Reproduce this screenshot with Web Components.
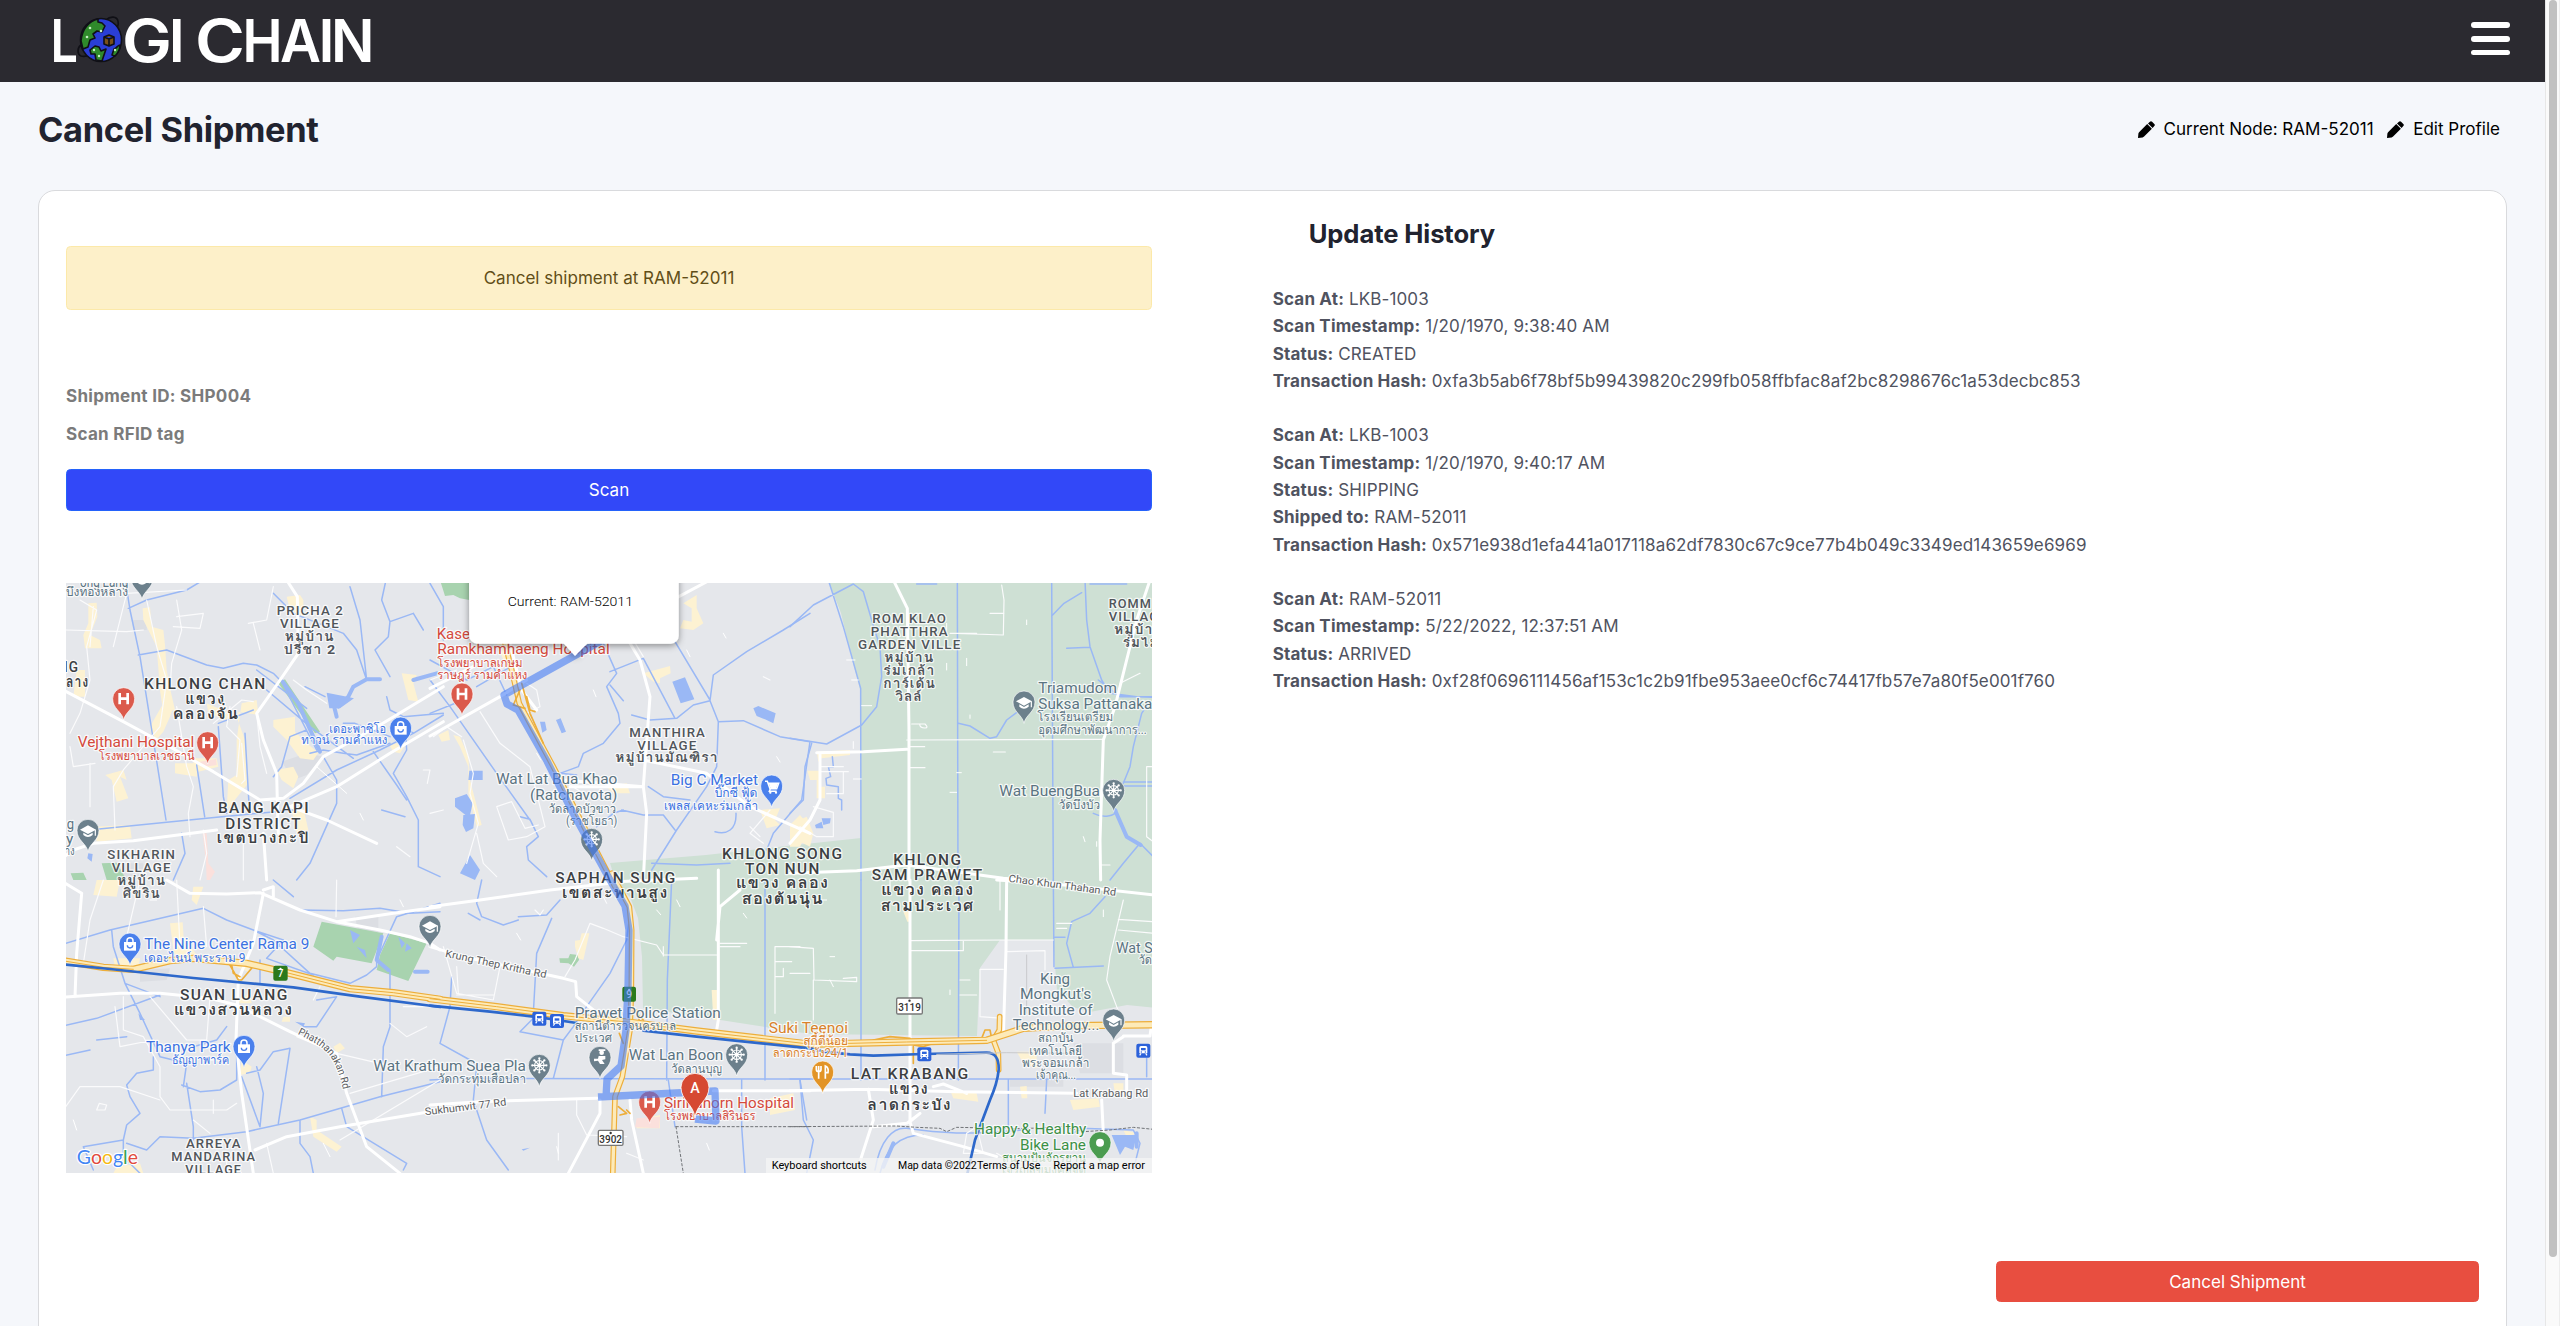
<!DOCTYPE html>
<html lang="en">
<head>
<meta charset="utf-8">
<title>Cancel Shipment</title>
<style>
html,body{margin:0;height:100%;overflow:hidden}
body{font-family:Inter,"Liberation Sans",sans-serif;font-size:17.05px;line-height:27.28px;background:#f5f7fb;color:#50535f}
</style>
</head>
<body>
<logi-app></logi-app>
<script>
const define = (name, html, setup) => {
  const tpl = document.createElement('template');
  tpl.innerHTML = html;
  customElements.define(name, class extends HTMLElement {
    constructor() {
      super();
      this.attachShadow({mode: 'open'}).append(tpl.content.cloneNode(true));
    }
    connectedCallback() { if (setup) setup(this, this.shadowRoot); }
  });
};

/* ---------- brand ---------- */
const letters = list => list.map(([c, x, w]) => `<tspan x="${x}" textLength="${w}" lengthAdjust="spacingAndGlyphs">${c}</tspan>`).join('');
define('logi-logo', `
<style>:host{display:block;width:340px;height:82px}svg{display:block}text{font-family:Inter,sans-serif;font-weight:600;font-size:58.5px;fill:#fff}</style>
<svg width="340" height="82" viewBox="46 0 340 82">
  <text y="61.5">${letters([['L', 50.5, 27.5]])}</text>
  <text y="61.5">${letters([['G', 122, 50], ['I', 168.8, 16], ['C', 195, 50], ['H', 242.5, 40], ['A', 280, 41], ['I', 318.6, 16], ['N', 331, 43.5]])}</text>
  <g stroke="#101016" stroke-width="1.6" stroke-linejoin="round">
    <path fill="none" d="M106 20c4-4 11-4 12 1 1 4-1 8-4 12M81 45c-4 3-4 9 0 11 3 1 7 0 10-1"/>
    <ellipse cx="101" cy="40" rx="20.500" ry="21.500" fill="#2a3ed6"/>
    <path fill="#2f8a2b" d="M98 19c-9 2-16 10-17 22l2 8 5-2 2-7 5-2-2-4 4-3 5 1 3-6-3-3-4-1zM90 50l5-4 4 1 2 4 5-2-2 6-2 6-6-1-1-6-4 0zM120 45c-2 0-3 3-6 4l-2 6 3 1c3-3 5-7 5-11z"/>
    <path fill="#7a5018" d="M104 37l5-2 5 2v7l-5 2-5-2zM104 37l5 2 5-2M109 39v7"/>
  </g>
  <g fill="#c8efc4"><circle cx="90" cy="28" r="1.300"/><circle cx="101" cy="31" r="1.300"/><circle cx="87" cy="37" r="1.300"/><circle cx="94" cy="50" r="1.200"/><circle cx="99" cy="56" r="1.200"/><circle cx="115" cy="50" r="1.200"/></g>
</svg>`);

define('logi-header', `
<style>
:host{display:flex;justify-content:space-between;align-items:flex-start;height:82px;background:#2b2a30;padding:0 35px 0 46px;box-sizing:border-box}
button{all:unset;display:flex;flex-direction:column;gap:8px;margin-top:22px}
i{display:block;width:39px;height:5.8px;border-radius:3px;background:#fff}
</style>
<logi-logo></logi-logo><button aria-label="Menu"><i></i><i></i><i></i></button>`);

define('edit-link', `
<style>:host{display:flex;align-items:center;color:#000;gap:9px}svg{display:block}</style>
<svg width="17" height="17" viewBox="0 0 17 17"><path d="M0 17 .4 12.400Q.6 11.600 1.300 10.900L9.200 3.100 13.900 7.800 6.100 15.600Q5.400 16.300 4.600 16.500zM10 2.400 11.900.7Q13-.4 14.100.7L16.300 2.900Q17.400 4 16.300 5.100L14.600 7z"/></svg>
<slot></slot>`);

define('page-title', `
<style>
:host{display:flex;justify-content:space-between;align-items:center;height:42px;margin:26px 7px 40px 0}
h1{margin:0;font-size:34.400px;line-height:43px;font-weight:700;letter-spacing:-.35px;color:#21232f;white-space:nowrap}
div{display:flex;gap:13.500px;white-space:nowrap}
</style>
<h1><slot></slot></h1><div><slot name="links"></slot></div>`);

define('alert-banner', `
<style>:host{display:flex;align-items:center;justify-content:center;height:64px;box-sizing:border-box;background:#fdf0c9;border:1px solid #fce9a9;border-radius:4.5px;color:#614e17}</style><slot></slot>`);

define('action-button', `
<style>
:host{display:flex;height:42px;box-sizing:border-box;align-items:center;justify-content:center;border-radius:4.5px;background:#3248f8;border:1px solid #2462fb;color:#fff}
:host([danger]){background:#e84e40;border-color:#e84e40;width:483px;height:41px}
</style><slot></slot>`);

define('field-label', `
<style>:host{display:block;height:27.300px;color:#7b7b7b;font-weight:700;letter-spacing:.28px}</style><slot></slot>`);

/* ---------- history ---------- */
define('history-entry', `
<style>:host{display:block;margin-bottom:27.280px;letter-spacing:.115px}p{margin:0;white-space:nowrap}b{font-weight:700;letter-spacing:.16px;color:#50535f}</style><div></div>`,
(el, root) => {
  const box = root.querySelector('div');
  for (const key of ['Scan At', 'Scan Timestamp', 'Status', 'Shipped to', 'Transaction Hash']) {
    const v = el.getAttribute(key.toLowerCase().replace(' ', '-'));
    if (!v) continue;
    const p = document.createElement('p'), b = document.createElement('b');
    b.textContent = key + ':';
    p.append(b, ' ' + v);
    box.append(p);
  }
});

define('update-history', `
<style>:host{display:block}h2{margin:0 0 36px;padding-left:36px;font-size:25.600px;line-height:30px;font-weight:700;letter-spacing:-.1px;color:#21232f}</style>
<h2>Update History</h2><slot></slot>`);

/* ---------- map ---------- */
/* Each tile keeps its own coordinates, three units to a pixel. */
const TILES = {A: [-6, -3], B: [364, -3], C: [724, -3], D: [-6, 297], E: [364, 297], F: [724, 297]};
const place = (t, s) => `<g transform="translate(${TILES[t]}) scale(.33333)">${s}</g>`;
const layers = [];
const lines = (color, width, tiles, extra = '') => {
  for (const t in tiles) layers.push(place(t, `<path d="${tiles[t]}" fill="none" stroke="${color}" stroke-width="${width}" stroke-linejoin="round" stroke-linecap="round" ${extra}/>`));
};
const areas = (color, tiles) => {
  for (const t in tiles) layers.push(place(t, `<path d="${tiles[t]}" fill="${color}"/>`));
};

layers.push('<rect width="1086" height="590" fill="#e5e7eb"/>');
layers.push('<path fill="#cee0d4" d="M762-3 775 30 787 80 795 110V255L730 262 640 272 544 280 550 300 564 314 572 335 576 374 577 425 744 451 911 453 914 385 934 357H987L991 407 1007 424 1024 429 1061 422 1091 425V-3z"/>');
areas('#dcdee3', {
  A: 'M215 120h45v30h-40zM665 545 740 520 790 530 740 585 700 600zM190 850h60v50h-60z',
  D: 'M240 270 330 265 320 300 240 305zM885 110h70v45h-60z', F: 'M850 490h150v90h-130zM660 600h160v20h-160z'});
areas('#a8d3af', {
  A: 'M655 310 675 298 780 455 765 460zM125 850 170 848 200 900H140zM32 880 70 878 80 900H40z',
  B: 'M30 0H118V60L90 55 70 45 45 48z',
  D: 'M785 125 970 160 935 250 830 230 820 242 760 200zM990 160 1100 190 1045 303 950 270 960 225z',
  E: 'M388 235 415 235 420 222 445 225 447 240 432 260 415 250 390 248z'});
areas('#fdf2d2', {
  A: 'M85 70 110 68 112 110 90 165 120 180 125 205 75 205 70 165 85 130zM248 85 270 82 275 140 310 150 315 195 320 270 330 325 345 390 310 400 300 330 290 200 250 120zM310 370 340 380 330 410 310 455 280 490 270 440zM50 270h25v80H40zM545 370 590 360 595 405 535 395 530 410 555 480 565 610 500 690 505 600 530 585 530 480zM440 370 510 400 500 420 445 400zM680 50 720 45 730 60 730 110 690 90zM640 420 705 410 705 455 740 490 775 518 760 540 720 535 680 480 640 440zM345 550 400 550 400 535 470 535 475 560 415 575 410 590 345 580zM650 570 700 560 715 590 700 625 665 600zM136 585 190 570 200 600 180 590 205 655 170 665 155 600zM1025 280 1070 285 1060 310 1075 365 1045 360zM985 490 1040 490 1020 520 1000 515zM100 740 210 735 215 775 110 785zM695 690 730 685 745 750 710 760z',
  B: 'M200 190 225 190 240 245 220 240zM640 280 720 258 722 280 690 295 690 310 670 305zM760 70 800 45 800 85 820 130 790 150 750 145 760 120 785 125 785 85zM25 465 55 450 60 480 35 485zM70 465 90 470 115 530 120 600 155 735 140 740 115 640 115 560 90 500zM530 620 590 610 600 640 550 640zM990 690 1050 685 1035 720 1050 735 1010 745zM1085 730 1130 710 1150 760 1140 800 1080 770z',
  C: 'M80 515 180 510 180 525 95 535 85 545zM52 572H90V620H105V655H80V600H60zM0 735 30 705 60 740 30 800 0 800z',
  D: 'M110 0 180 0 170 50 100 45zM400 20 430 20 410 75 395 60zM330 130 368 127 372 190 400 210 420 240 360 250 340 210zM160 235 240 235 235 262 165 262zM500 250 570 250 565 275zM530 360 570 340 575 370 540 370zM545 540 575 560 570 580 540 585zM820 500 840 488 855 505 830 520zM670 410 690 410 690 425 665 425zM750 710 770 720 770 750 845 800 830 815 760 770zM170 860 240 850 250 880H160z',
  E: 'M455 160 478 160 460 240 445 235 435 200 435 182 450 180zM845 330 862 330 862 420 850 420zM1020 655 1090 640 1095 690 1020 705zM620 720 690 705 690 745 620 745z',
  F: 'M340 95h22v30h-10zM480 630 560 640 565 665 490 655zM690 620 710 618 712 655 695 655zM840 660 925 655 930 680 850 690zM970 610 1000 610 1000 640 975 640zM680 515 740 515 740 565 700 550zM1000 750 1040 760 1010 770z'});
areas('#fbe0dc', {E: 'M620 715 690 710 688 745 615 742z', A: 'M420 545 468 537 470 555 425 562zM428 760 440 760 445 850 465 875 450 900H440L438 850z'});

/* canals and ponds */
lines('#9ab8f5', 4.500, {
  A: 'M196 0 210 90 240 230 280 480 318 720M235 225 320 210 440 255 490 265 550 250 590 255 640 280 665 305 770 510M205 85 260 60 380 30 430 0M590 270 740 385M620 330 750 440 880 535M475 440 490 650 500 700M555 460 568 690M475 430 580 390M410 555 434 710M110 748 470 712 700 690M690 655 830 570 960 510 1060 460 1150 405M740 450 690 470 665 560 640 590M750 520 790 510 850 520 890 525 990 490M790 530 830 600 830 670 790 760 750 850 710 900M870 20 900 120 920 300M640 40 700 100 800 140 850 160 890 210 920 300M978 0 965 60 990 125 1060 100M990 125 985 170 945 210 990 290M1060 100 1090 150M735 320 795 350M980 350 990 390 1030 410 1150 400M1035 420 1040 510 1000 580 1040 650 1075 720 1075 860 1140 890M940 515 1010 615 1040 660M965 690 1035 710M850 430 885 430 990 470M1010 420 1060 460M365 760 375 820 340 900',
  B: 'M0 240 110 300 190 260 230 345M0 300 60 380 200 580 300 720M140 320 260 250M0 400 100 360M0 10 40 80 40 180M520 190 560 280 530 320 565 400 570 430 520 490 460 520 445 560 390 580 440 585M540 275 640 235 735 415M620 0 690 110 840 360M540 315 580 362M605 405 660 420 740 415 790 375 840 362 850 285 950 215 1060 150 1140 100M840 362 865 425 860 560 830 620 740 750 665 870M865 425 940 422 1050 470 1140 485M1140 485 1115 660 1030 760 1010 810M575 690 640 705 700 705 735 750M655 620 700 650 780 660M500 740 550 700 580 690M855 755C890 765 920 750 918 700M270 710 300 718 325 770 290 800 295 840 350 890M665 850 800 855 900 850',
  C: 'M0 140 70 75 190 12 220 35 245 120 270 200 275 290 260 380 215 435 110 492 0 475M115 0 160 140 212 325 213 900M502 0 504 900M785 0 790 900M785 108 822 70 875 38M380 12H440M900 12H1010M885 0 890 120 900 200 935 300M505 430 540 438 600 475 620 470 650 420 690 390M935 300 960 340 1040 350 1090 352M1075 370 1055 400 1030 500 1020 560 1000 610M1000 606H1090M1000 618H1090M830 205 900 202M925 300 990 350 1090 350M960 900 1000 850 1050 790 1090 830M910 700C940 715 975 710 980 690M65 490 45 560 40 660 0 700M127 530 130 560 115 560 122 590 108 595 110 615 145 620 145 655 155 660 155 690',
  D: 'M0 195 150 150 430 85 500 120 580 150 640 180 750 280 870 310 920 285 950 260 950 240 1010 110 1140 70M580 150 670 180 620 235 760 285M155 150 160 200 195 310 240 400 300 530 380 550 370 620M0 440 110 415 300 345M195 310 300 350M0 530 90 510M380 610 400 740 400 780M365 615 420 635 480 630 530 600 530 480M280 530 280 570 230 580 200 615 210 650 240 700 200 735 190 780 190 830 240 880M100 870 70 800 190 780M200 790 260 810 300 770 400 775 560 755 720 720 960 650 1140 605M545 590 600 740M560 580 600 570 640 515 690 505 655 730M590 560 610 640 600 740M770 360 830 350 770 440 730 440M720 90 850 92 960 85 1050 100 1140 95M990 270 990 440 970 500 965 650M600 240 600 310M720 720 720 790 750 830 760 880M845 685 860 740 1040 850 1030 870M110 480 200 470M500 440 470 480 400 500M640 0 700 50',
  E: 'M155 0 140 70 155 110 220 135 265 120M265 110 350 105 390 60M365 115 320 220 310 400M115 100 150 120M600 100 590 180 540 280 470 380 430 440 400 480 270 455 310 415M400 480 370 595M65 290 60 380 30 490 120 540 140 560 130 660 170 780 235 870M0 600 100 595 1140 597M725 0 712 300 710 600M715 600 735 740M1005 0 1005 600M935 600 935 740 945 880M1110 600 1130 720',
  F: 'M213 0V600M507 0 505 600M790 0 792 260M945 50 900 100 845 125 830 190 850 262M795 172 825 172M795 265 940 258M0 597H1090M30 600 40 720 70 780 50 880M255 870C270 780 310 740 350 745 450 760 530 765 700 750M270 880C290 800 330 765 400 765M655 600V740M770 600 765 700M850 760 870 745 1030 750 1050 790 1030 870M1070 535V590'});
lines('#9ab8f5', 12, {A: 'M668 305 715 370 780 515M820 370 830 410M960 298 920 298 880 320 865 350 835 380M1060 300 1130 280', D: 'M965 170 950 240 985 270M1065 275h38', C: 'M975 690 1010 770 1052 795', F: 'M310 790 280 860M1040 760 1040 800'});
areas('#9ab8f5', {
  A: 'M800 338 850 348 882 355 840 385 808 385zM85 820 98 822 95 845 82 835z',
  B: 'M727 305 765 292 793 358 752 370zM970 385 985 378 1037 400 1030 430 1005 418 980 408zM378 420 392 415 408 455 395 460zM330 425 345 425 350 450 337 458zM118 572 158 572 158 600 115 600zM75 655 110 642 128 670 118 714 75 680zM100 705 135 702 130 745 108 756 98 735zM90 880 120 825 150 870 135 900z',
  C: 'M75 735 95 725 100 745 78 745zM95 715 122 715 120 730 100 735z',
  D: 'M870 150 900 165 880 190zM890 200 915 210 920 235zM1015 170 1035 190 1025 205zM1040 190 1055 205 1035 215zM235 400 255 420 240 420zM705 425 735 430 730 440z',
  F: 'M965 765 1040 765 1030 810 1005 800 990 825z',
  E: 'M275 808 300 803 280 812z'});

/* small streets */
lines('#fbfbfc', 3.500, {
  A: 'M18 150 200 155 250 150M60 60 110 90 80 200 90 300 60 400 30 460M100 80 90 200M105 550 40 560 30 500M90 550 90 680M260 60 290 200 320 300 300 440 190 570 160 620 165 750M160 200 200 40 380 30M340 140 420 145 430 100 350 110M330 330 335 250 365 150 350 60M350 380 380 560 400 620 385 700 390 770M510 380 500 440 540 480 530 590M545 490 555 600 545 610M565 130 620 120 640 20M580 130 600 210M460 430 545 360 580 365M620 580 600 500 590 400M550 770V900M800 370 740 330 700 300M1010 800 1050 830M1090 570h20l-8 40M430 750 440 820 420 900',
  B: 'M290 310 320 330 330 380 290 400M150 395 210 490 300 560 345 740 290 770 235 780 200 680 245 665 285 745 325 735M95 470 50 440 10 470M100 480 130 580 120 640 145 730 110 850M380 590 460 640M0 300 80 270M610 180 640 230M1020 690 960 760 1000 790M960 740 990 770M40 690 0 700M1000 290l20 10M140 760 160 850 200 890',
  C: 'M635 15 642 60 640 165 500 160M600 100h42M480 160h80M365 432h40q12 12 0 12-16 0-16-12M360 500h44M360 563h45M350 480 940 478M175 575h-85M160 575v66H110M90 560 160 560M70 680 130 697V770H80L30 740M1070 560v210l20 15M1090 560h-20M990 310 1050 280M930 855h30M190 505v-20M610 516h36',
  D: 'M130 0 90 120 70 250M240 0 200 170M350 0 360 200M430 80 440 200M190 350 190 450 250 470 300 560 300 650 330 690 500 690 530 670M270 350 380 480 440 480 450 350M10 690 60 620 180 620 300 660M110 690 118 670 140 675 135 690zM280 480 180 500 165 380M460 700V660M620 790 640 880M840 780 1140 600M870 640 970 610 1140 560M990 430 1040 470 1100 440M1030 380h110M760 360 780 320M710 470 830 520 1000 560M830 0 828 110M400 720 450 760M500 820V880',
  E: 'M405 290 435 240 480 130 520 145 580 170 680 195 700 225 860 225M40 200 80 340 190 360 210 260M80 260 85 340M80 345h110M700 200v28M870 190h80M870 200h60M1035 200 1110 200M1035 200V290H1060V265M1035 245h50M1080 280 1140 280M1035 200V400M340 90 330 105 315 90M385 760v80M440 655v50l30 60 120 5M590 820 640 840',
  F: 'M0 200 70 205 72 300 200 305 200 292 160 295M70 300 70 420M360 182 650 180 790 180M360 212 520 212V182M650 215 765 212V270M570 268H640M570 268 570 410 640 415V470M510 300h30M510 345h50M800 130h45M800 145h30M985 118 1090 125M985 150 1090 160M630 0V90M1000 60 960 230 950 300 980 380 1000 430M300 0V30M620 820 690 860M530 760 560 740 580 820 520 820z'});

/* main streets */
lines('#fff', 9, {
  A: 'M0 325 190 425 320 495 460 575 600 660M680 0 712 50 715 220 650 315 590 400 610 480 650 580 652 665 655 760M600 660 670 655 730 610 790 530 960 435 1150 320M690 680 830 620 990 520 1150 425M690 680 800 720 950 790M0 840 40 810 100 790 220 782 470 750M610 760 620 900',
  B: 'M0 325 130 260M0 468 210 350 290 300M420 620 520 620 640 620M640 620 660 350 630 240 600 190M690 80 840 0M640 620 650 700 640 900M640 540 830 580 960 680 1140 760M240 190 275 330 320 390M400 600 640 620',
  C: 'M310 0 352 85 357 450 357 900M80 518 220 515 350 508M90 520 90 660 60 720 0 790M1080 0 1040 120 975 380 940 480 930 780 932 900M0 880 200 872 350 855 640 895 700 900',
  D: 'M18 840M65 40 50 220 45 350M0 352 180 340 300 340 450 355 530 375 690 455 830 520 860 640 920 800 1020 880M320 0 390 40 500 42 600 38 720 90 830 125 960 150 1050 170 1110 190 1140 210M610 40 580 190 535 300 528 480 545 640 580 880M585 810 680 770 840 740 1140 690M830 125 1000 100 1140 80M640 50 640 20 610 30M0 0 65 40',
  E: 'M0 80 150 60 360 30 540 10M560 5 800 -5M0 200 100 230 400 295 437 305 440 350 490 390M0 675 150 665 500 655M850 632 1140 632M865 -30 865 420 860 450M510 660 510 700 415 880M600 660 605 720 640 880M930 30 870 80 860 180',
  F: 'M360 0V730M650 0 648 210 640 470M620 0 760 8 870 20 1090 45M0 632 235 628 500 635 860 640M235 628 250 720 205 860M250 740 350 730 390 700 360 725 370 760 520 800 620 830M430 620 460 612 530 640M1000 470 970 490 970 580 1010 585V640M935 660 940 760M1000 468 1080 468 1085 430'});
lines('#fff', 3, {
  A: 'M770 560 860 640M900 700l10 20', B: 'M770 210l10 20M320 520l12 20M880 160l8 14M1040 530l10 16M490 330l8 20',
  C: 'M170 240h25M185 300h20M215 377h30M190 597h24M470 130v20M470 250v20M500 578h14M480 637h20M530 235v22M710 120v14M880 770l5 15M540 405v10M920 785v14',
  D: 'M430 540h30M40 720l10 30M790 790l20 40M270 60h20M1020 60l10 20', E: 'M740 60l10 20M520 50l10 20M680 90l12 14M260 160l12 20M940 100l10 14M380 800l5 20M830 790l8 20',
  F: 'M80 60h30M120 300l10 20M120 230h14M940 90v20M480 330v14M420 660l8 30M860 540l20 8M740 780l20 10'});

/* ramps */
lines('#edae3a', 5, {
  D: 'M510 255 535 300 545 300 575 265M515 255 520 280 540 290',
  E: 'M600 370 620 400 640 420M620 390 630 430M568 460 580 490M565 680 590 700 570 705M590 690 600 700',
  F: 'M250 480 300 470 360 475M370 495 400 500 430 490M575 475 585 450 600 450 605 475M370 500V550'});
const highway = (w, tiles) => { lines('#edae3a', w, tiles); lines('#fdeab8', w - 7, tiles); };
highway(17, {
  F: 'M629 410 628 450 610 480 625 520 626 570',
  B: 'M215 150 245 270 268 370 300 430 370 560 480 775 555 920',
  E: 'M545 -20 598 80 605 150 604 340 600 450 577 590 555 650 548 890'});
lines('#edae3a', 5, {B: 'M275 310 300 400 340 490M270 330 250 375 285 385M290 350 300 390 315 395'});
highway(22, {
  D: 'M0 241 130 262 220 268 330 242 400 235 560 250 680 278 870 326 1000 338 1140 358',
  E: 'M0 356 200 380 400 407 600 427 800 453 1145 493',
  F: 'M55 493 180 490 350 486 590 481 700 445 850 437 1110 434'});
lines('#edae3a', 3, {D: 'M0 241 130 262 220 268M680 278 870 326 1000 338 1140 358', E: 'M0 356 200 380 400 407 600 427 800 453 1145 493', F: 'M55 493 180 490 350 486 590 481'});
lines('#2d68cb', 8, {
  D: 'M0 252 150 267 400 294 700 322 900 350 1140 381',
  E: 'M0 377 180 395 330 412 440 429M640 452 800 470 1140 505',
  F: 'M60 505 100 515 180 523 250 527 400 522 590 518Q628 518 626 570 622 610 600 660 L555 780 530 890'});
lines('#c9cacc', 3, {F: 'M440 523 650 518 850 520M710 225V400'});
lines('#6f7276', 3, {E: 'M738 740 760 880M738 740H1140', F: 'M0 740 320 738 380 742 450 745 470 755 500 742 700 746 820 740 880 755 960 750 1030 742 1090 748'}, 'stroke-dasharray="7 7"');

/* pins */
const pinShape = '<path d="M0 0C-5-26-33-33-33-64A33 33 0 0 1 33-64C33-33 5-26 0 0z" stroke="#fff" stroke-width="2"';
const glyphs = {
  hospital: '<path d="M-12-81v34M12-81v34M-12-64H12" stroke="#fff" stroke-width="8" fill="none"/>',
  bag: '<path d="M-18-70H18V-44H-18z" fill="#fff"/><path d="M-9-68v-6a9 9 0 0 1 18 0v6" fill="none" stroke="#fff" stroke-width="4.500"/><path d="M-8-60a8 8 0 0 0 16 0" fill="none" stroke="#4a80ec" stroke-width="4"/>',
  cart: '<path d="M-20-78h7l8 22h20l6-16H-10M-4-56l-3 8h22" fill="none" stroke="#fff" stroke-width="4.500"/><path d="M-9-73H20L14-58H-4z" fill="#fff"/><circle cx="-4" cy="-44" r="3.500" fill="#fff"/><circle cx="13" cy="-44" r="3.500" fill="#fff"/>',
  school: '<path d="M-24-66 0-79 24-66 0-53zM-14-57 0-49 14-57V-50Q0-38-14-50z" fill="#fff"/><path d="M22-66v18" stroke="#fff" stroke-width="3.500"/>',
  wheel: '<g fill="none" stroke="#fff" stroke-width="3.500"><circle cy="-64" r="14"/><path d="M0-84v40M-20-64h40M-14-78l28 28M14-78l-28 28"/></g><circle cy="-64" r="5" fill="#fff"/><g fill="none" stroke="#fff" stroke-width="7" stroke-linecap="round"><path d="M0-85v.1M0-43v.1M-21-64h.1M21-64h.1M-15-79h.1M15-79h.1M-15-49h.1M15-49h.1"/></g>',
  police: '<circle cx="5" cy="-78" r="7" fill="#fff"/><path d="M-4-88h20v5H-4zM-4-68H16V-58L6-56 14-44H0L-6-54-18-52V-60H-6z" fill="#fff"/>',
  food: '<path d="M-12-82v38M-19-82v10q0 7 7 7t7-7v-10M8-44v-38q11 4 8 20H8" fill="none" stroke="#fff" stroke-width="5"/>',
  dot: '<circle cy="-64" r="12" fill="#fff"/>'
};
const pin = (t, x, y, color, icon) => layers.push(place(t, `<g transform="translate(${x} ${y})">${pinShape} fill="${color}"/>${glyphs[icon]}</g>`));
const RED = '#db5a4c', BLUE = '#4a80ec', SLATE = '#6c808c';
[['A', 246, 58, SLATE, 'school'], ['A', 191, 420, RED, 'hospital'], ['A', 443, 552, RED, 'hospital'], ['A', 1022, 508, BLUE, 'bag'], ['A', 84, 815, SLATE, 'school'],
 ['B', 96, 406, RED, 'hospital'], ['B', 485, 842, SLATE, 'wheel'], ['B', 1025, 682, BLUE, 'cart'],
 ['C', 702, 430, SLATE, 'school'], ['C', 971, 695, SLATE, 'wheel'],
 ['D', 210, 256, BLUE, 'bag'], ['D', 552, 563, BLUE, 'bag'], ['D', 1110, 203, SLATE, 'school'],
 ['E', 328, 620, SLATE, 'wheel'], ['E', 510, 596, SLATE, 'police'], ['E', 920, 588, SLATE, 'wheel'], ['E', 659, 730, RED, 'hospital'],
 ['F', 98, 640, '#e29427', 'food'], ['F', 971, 484, SLATE, 'school'], ['F', 930, 852, '#4b9c50', 'dot']].forEach(p => pin(...p));

const station = (t, x, y) => layers.push(place(t, `<g transform="translate(${x} ${y})"><rect x="-21" y="-21" width="42" height="42" rx="6" fill="#2c62da"/><path d="M-12-9Q-12-14-7-14H7Q12-14 12-9V8H-12z" fill="#fff"/><path d="M-7-8H7V-1H-7z" fill="#2c62da"/><circle cx="-6" cy="4" r="2" fill="#2c62da"/><circle cx="6" cy="4" r="2" fill="#2c62da"/><path d="M-7 8-11 14M7 8 11 14" stroke="#fff" stroke-width="3.500"/></g>`));
station('E', 328, 416); station('E', 381, 423); station('F', 403, 523); station('F', 1060, 512);

/* labels: tile, x, baseline, width, style, text */
const label = (t, x, y, w, cls, s, extra = '') => layers.push(place(t, `<text x="${x}" y="${y}" class="${cls}" textLength="${w}" lengthAdjust="spacingAndGlyphs" ${extra}>${s}</text>`));
[['A', 60, 20, 145, 'poi slate', 'ong Lang'], ['A', 18, 48, 186, 'th slate', 'บึงทองหลาง'],
 ['A', 650, 105, 202, 'cap', 'PRICHA 2'], ['A', 660, 145, 180, 'cap', 'VILLAGE'], ['A', 674, 183, 150, 'thc', 'หมู่บ้าน'], ['A', 671, 223, 158, 'thc', 'ปรีชา 2'],
 ['A', -6, 277, 64, 'big', 'NG'], ['A', 18, 322, 70, 'thb', 'ลาง'],
 ['A', 252, 327, 368, 'big', 'KHLONG CHAN'], ['A', 376, 372, 120, 'thb', 'แขวง'], ['A', 338, 418, 200, 'thb', 'คลองจั่น'],
 ['A', 53, 502, 350, 'poi red', 'Vejthani Hospital'], ['A', 116, 541, 288, 'th red', 'โรงพยาบาลเวชธานี'],
 ['A', 808, 458, 170, 'th blue', 'เดอะพาซิโอ'], ['A', 724, 492, 258, 'th blue', 'ทาวน์ รามคำแหง'],
 ['A', 474, 700, 276, 'big', 'BANG KAPI'], ['A', 496, 746, 230, 'big', 'DISTRICT'], ['A', 470, 790, 280, 'thb', 'เขตบางกะปิ'],
 ['A', 20, 748, 22, 'poi slate', 'g'], ['A', 18, 792, 22, 'poi slate', 'y'], ['A', 14, 826, 30, 'th slate', 'าง'],
 ['A', 142, 836, 206, 'cap', 'SIKHARIN'], ['A', 155, 876, 180, 'cap', 'VILLAGE'], ['D', 172, 15, 146, 'thc', 'หมู่บ้าน'], ['D', 188, 54, 114, 'thc', 'ศิขริน'],
 ['B', 20, 178, 100, 'poi red', 'Kase'], ['B', 22, 223, 517, 'poi red', 'Ramkhamhaeng Hospital'], ['B', 22, 260, 256, 'th red', 'โรงพยาบาลเกษม'], ['B', 22, 297, 270, 'th red', 'ราษฎร์ รามคำแหง'],
 ['B', 598, 471, 230, 'cap', 'MANTHIRA'], ['B', 622, 511, 180, 'cap', 'VILLAGE'], ['B', 556, 547, 310, 'thc', 'หมู่บ้านมัณฑิรา'],
 ['B', 198, 613, 364, 'poi slate', 'Wat Lat Bua Khao'], ['B', 300, 659, 262, 'poi slate', '(Ratchavota)'], ['B', 356, 698, 202, 'th slate', 'วัดลาดบัวขาว'], ['B', 408, 734, 154, 'th slate', '(ราชโยธา)'],
 ['B', 722, 615, 262, 'poi blue', 'Big C Market'], ['B', 854, 652, 128, 'th blue', 'บิ๊กซี ฟู้ด'], ['B', 702, 690, 282, 'th blue', 'เพลส เคหะร่มเกล้า'],
 ['B', 876, 836, 364, 'big', 'KHLONG SONG'], ['B', 945, 882, 227, 'big', 'TON NUN'], ['E', 918, 25, 280, 'thb', 'แขวง คลอง'], ['E', 935, 72, 247, 'thb', 'สองต้นนุ่น'],
 ['B', 376, 908, 364, 'big', 'SAPHAN SUNG'], ['E', 396, 55, 320, 'thb', 'เขตสะพานสูง'],
 ['C', 247, 128, 224, 'cap', 'ROM KLAO'], ['C', 242, 168, 234, 'cap', 'PHATTHRA'], ['C', 204, 207, 310, 'cap', 'GARDEN VILLE'], ['C', 283, 246, 150, 'thc', 'หมู่บ้าน'], ['C', 280, 285, 156, 'thc', 'ร่มเกล้า'], ['C', 280, 324, 158, 'thc', 'การ์เด้น'], ['C', 316, 362, 82, 'thc', 'วิลล์'],
 ['C', 956, 84, 130, 'cap', 'ROMM'], ['C', 956, 124, 152, 'cap', 'VILLAG'], ['C', 972, 162, 150, 'thc', 'หมู่บ้าน'], ['C', 998, 200, 110, 'thc', 'ร่มไม้'],
 ['C', 745, 340, 236, 'poi slate', 'Triamudom'], ['C', 745, 386, 342, 'poi slate', 'Suksa Pattanaka'], ['C', 742, 423, 228, 'th slate', 'โรงเรียนเตรียม'], ['C', 745, 461, 325, 'th slate', 'อุดมศึกษาพัฒนาการ...'],
 ['C', 628, 648, 302, 'poi slate', 'Wat BuengBua'], ['C', 806, 686, 124, 'th slate', 'วัดบึงบัว'],
 ['C', 310, 854, 207, 'big', 'KHLONG'], ['C', 245, 901, 336, 'big', 'SAM PRAWET'], ['F', 274, 46, 280, 'thb', 'แขวง คลอง'], ['F', 272, 93, 282, 'thb', 'สามประเวศ'],
 ['F', 978, 220, 110, 'poi slate', 'Wat S'], ['F', 1046, 253, 40, 'th slate', 'วัด'],
 ['F', 750, 312, 90, 'poi slate', 'King'], ['F', 690, 358, 214, 'poi slate', "Mongkut's"], ['F', 686, 404, 222, 'poi slate', 'Institute of'], ['F', 668, 450, 260, 'poi slate', 'Technology...'],
 ['F', 744, 487, 106, 'th slate', 'สถาบัน'], ['F', 718, 524, 158, 'th slate', 'เทคโนโลยี'], ['F', 696, 561, 202, 'th slate', 'พระจอมเกล้า'], ['F', 738, 597, 120, 'th slate', 'เจ้าคุณ...'],
 ['F', 182, 597, 357, 'big', 'LAT KRABANG'], ['F', 297, 641, 120, 'thb', 'แขวง'], ['F', 232, 690, 254, 'thb', 'ลาดกระบัง'],
 ['F', 850, 652, 225, 'road', 'Lat Krabang Rd'],
 ['F', 552, 763, 337, 'poi green', 'Happy &amp; Healthy'], ['F', 690, 809, 198, 'poi green', 'Bike Lane'], ['F', 636, 845, 252, 'th green', 'สนามปั่นจักรยาน'], ['F', 636, 881, 252, 'th green', 'เจริญสุขมงคลจิต'],
 ['E', 1016, 458, 238, 'poi orange', 'Suki Teenoi'], ['F', 40, 494, 134, 'th orange', 'สุกี้ตี๋น้อย'], ['E', 1028, 530, 226, 'th orange', 'ลาดกระบัง24/1'],
 ['D', 253, 207, 495, 'poi blue', 'The Nine Center Rama 9'], ['D', 252, 246, 304, 'th blue', 'เดอะไนน์ พระราม 9'],
 ['D', 360, 360, 326, 'big', 'SUAN LUANG'], ['D', 342, 405, 358, 'thb', 'แขวงสวนหลวง'],
 ['D', 258, 515, 254, 'poi blue', 'Thanya Park'], ['D', 336, 552, 172, 'th blue', 'ธัญญาพาร์ค'],
 ['D', 940, 572, 458, 'poi slate', 'Wat Krathum Suea Pla'], ['E', 24, 609, 264, 'th slate', 'วัดกระทุ่มเสือปลา'],
 ['D', 378, 804, 167, 'cap', 'ARREYA'], ['D', 334, 843, 254, 'cap', 'MANDARINA'], ['D', 376, 881, 170, 'cap', 'VILLAGE'],
 ['E', 434, 415, 438, 'poi slate', 'Prawet Police Station'], ['E', 434, 449, 304, 'th slate', 'สถานีตำรวจนครบาล'], ['E', 434, 485, 112, 'th slate', 'ประเวศ'],
 ['E', 596, 540, 284, 'poi slate', 'Wat Lan Boon'], ['E', 724, 578, 152, 'th slate', 'วัดลานบุญ'],
 ['E', 702, 683, 390, 'poi red', 'Sirindhorn Hospital'], ['E', 702, 719, 275, 'th red', 'โรงพยาบาลสิรินธร'],
 ['F', 655, 5, 325, 'road', 'Chao Khun Thahan Rd', 'transform="rotate(7.500 655 5)"'],
 ['D', 1096, 706, 246, 'road', 'Sukhumvit 77 Rd', 'transform="rotate(-7 1096 706)"'],
 ['E', 44, 230, 310, 'road', 'Krung Thep Kritha Rd', 'transform="rotate(12 44 230)"']].forEach(l => label(...l));
layers.push(place('D', '<path id="curve" d="M712 462C770 490 795 505 815 535 835 570 843 600 852 640" fill="none"/><text class="road"><textPath href="#curve" textLength="228" lengthAdjust="spacingAndGlyphs">Phatthanakan Rd</textPath></text>'));

/* route shields */
const shield = (t, x, y, w, h, s, green) => layers.push(place(t, `<rect x="${x}" y="${y}" width="${w}" height="${h}" rx="4" fill="${green ? '#2b7a1c' : '#fff'}" stroke="${green ? '#2b7a1c' : '#777'}" stroke-width="4"/><circle cx="${x + w / 2}" cy="${y + 8}" r="3.500" fill="${green ? '#fff' : '#333'}"/><text x="${x + w / 2}" y="${y + h - 8}" text-anchor="middle" font-size="30" fill="${green ? '#fff' : '#333'}" font-weight="500">${s}</text>`));
shield('D', 642, 259, 39, 41, '7', true); shield('E', 579, 322, 37, 41, '9', true);
shield('E', 505, 751, 74, 45, '3902'); shield('F', 320, 354, 77, 48, '3119');

/* driving route */
layers.push('<path fill="none" stroke="#3f78f5" stroke-opacity=".58" stroke-width="7.300" stroke-linejoin="round" d="M535 58 438 112 441 121 452 127 481 178 507 230 544 297 559 323 563 347 562 404 560 447 555 483 541 496 540 514M532 514 649 508 650 538 629 536"/>');

/* destination marker */
layers.push(place('E', '<g transform="translate(795 714)"><path d="M0 0C-4-42-42-52-42-92A42 42 0 0 1 42-92C42-52 4-42 0 0z" fill="#d64932" stroke="#fff" stroke-width="2.500"/><text y="-76" text-anchor="middle" font-size="43" font-weight="500" fill="#fff">A</text></g>'));

/* attribution */
layers.push('<path fill="#f5f5f5" fill-opacity=".78" d="M700 575H1086V590H700z"/>');
label('D', 50, 852, 184, 'goog', '<tspan fill="#4285f4">G</tspan><tspan fill="#e14a3c">o</tspan><tspan fill="#f6b90f">o</tspan><tspan fill="#4285f4">g</tspan><tspan fill="#34a353">l</tspan><tspan fill="#e14a3c">e</tspan>');
[['E', 1025, 867, 285, 'Keyboard shortcuts'], ['F', 324, 867, 236, 'Map data ©2022'], ['F', 561, 867, 190, 'Terms of Use'], ['F', 790, 867, 275, 'Report a map error']]
  .forEach(([t, x, y, w, s]) => label(t, x, y, w, 'foot', s));

/* info window */
layers.push('<path d="M403-10H612.700V52.700A8 8 0 0 1 604.700 60.700H521L509 73 498 60.700H411.300A8 8 0 0 1 403.300 52.700z" fill="#fff" filter="url(#shade)"/>');
layers.push(place('B', '<text x="233" y="79" font-size="40" font-weight="300" fill="#000" textLength="376" lengthAdjust="spacingAndGlyphs">Current: RAM-52011</text>'));

define('shipment-map', `
<style>
:host{display:block;height:590px;overflow:hidden}
svg{display:block}
text{font-family:Roboto,Loma,"Noto Sans Thai Looped","Noto Looped Thai",Garuda,Waree,"Noto Serif Thai","Noto Sans Thai",sans-serif}
.big,.cap,.thb,.thc,.poi,.th,.road,.goog{paint-order:stroke;stroke:#fff;stroke-opacity:.8;stroke-width:7px;stroke-linejoin:round}
.big,.cap,.thb,.thc{fill:#3c4043;font-weight:500}
.big{font-size:45px;letter-spacing:4px}.cap{font-size:36px;letter-spacing:3px;fill:#50555a}
.thb{font-size:46px;letter-spacing:4px;font-weight:700}.thc{font-size:39px;letter-spacing:3px;font-weight:700;fill:#50555a}
.poi{font-size:43px}.th{font-size:37px}
.road{font-size:31px;fill:#5a5c60}
.slate{fill:#5b7482}.red{fill:#d44a3d}.blue{fill:#3b72e2}.green{fill:#3c9046}.orange{fill:#d9822b}
.goog{font-family:Lato,sans-serif;font-size:60px;font-weight:400;stroke-opacity:1}
.foot{font-size:30px;fill:#000}
</style>
<svg width="1086" height="590" viewBox="0 0 1086 590">
<defs><filter id="shade" x="-20%" y="-30%" width="140%" height="180%"><feDropShadow dx="0" dy="2" stdDeviation="3.500" flood-opacity=".4"/></filter></defs>
${layers.join('')}
</svg>`);

/* ---------- page ---------- */
define('shipment-card', `
<style>
:host{display:block;box-sizing:border-box;height:1300px;background:#fff;border:1px solid #d9dadd;border-radius:17px;padding:0 27px}
main{display:grid;grid-template-columns:1086px 1fr;column-gap:120.700px}
.left{padding-top:55px}
alert-banner{margin-bottom:72.300px}
field-label{margin-bottom:10.700px}
.left action-button{margin:21.400px 0 72px}
field-label:nth-of-type(2){margin-bottom:0}
update-history{padding-top:28px}
footer{display:flex;justify-content:flex-end;margin-top:88px}
</style>
<main>
  <div class="left">
    <alert-banner>Cancel shipment at RAM-52011</alert-banner>
    <field-label>Shipment ID: SHP004</field-label>
    <field-label>Scan RFID tag</field-label>
    <action-button>Scan</action-button>
    <shipment-map></shipment-map>
  </div>
  <update-history>
    <history-entry scan-at="LKB-1003" scan-timestamp="1/20/1970, 9:38:40 AM" status="CREATED" transaction-hash="0xfa3b5ab6f78bf5b99439820c299fb058ffbfac8af2bc8298676c1a53decbc853"></history-entry>
    <history-entry scan-at="LKB-1003" scan-timestamp="1/20/1970, 9:40:17 AM" status="SHIPPING" shipped-to="RAM-52011" transaction-hash="0x571e938d1efa441a017118a62df7830c67c9ce77b4b049c3349ed143659e6969"></history-entry>
    <history-entry scan-at="RAM-52011" scan-timestamp="5/22/2022, 12:37:51 AM" status="ARRIVED" transaction-hash="0xf28f0696111456af153c1c2b91fbe953aee0cf6c74417fb57e7a80f5e001f760"></history-entry>
  </update-history>
</main>
<footer><action-button danger>Cancel Shipment</action-button></footer>`);

define('scroll-track', `
<style>:host{display:block;width:15px;box-sizing:border-box;background:#fafafa;border-left:1px solid #e7e7e7;border-right:1px solid #ededed;padding-left:3px}
i{display:block;width:8px;height:1257px;border-radius:4px;background:#c1c1c1}</style><i></i>`);

define('logi-app', `
<style>
:host{display:grid;grid-template-columns:2545px 15px;height:1326px;overflow:hidden}
.view{overflow:hidden;background:#f5f7fb}
section{padding:0 38px}
</style>
<div class="view">
  <logi-header></logi-header>
  <section>
    <page-title>Cancel Shipment<edit-link slot="links">Current Node: RAM-52011</edit-link><edit-link slot="links">Edit Profile</edit-link></page-title>
    <shipment-card></shipment-card>
  </section>
</div>
<scroll-track></scroll-track>`);
</script>
</body>
</html>
